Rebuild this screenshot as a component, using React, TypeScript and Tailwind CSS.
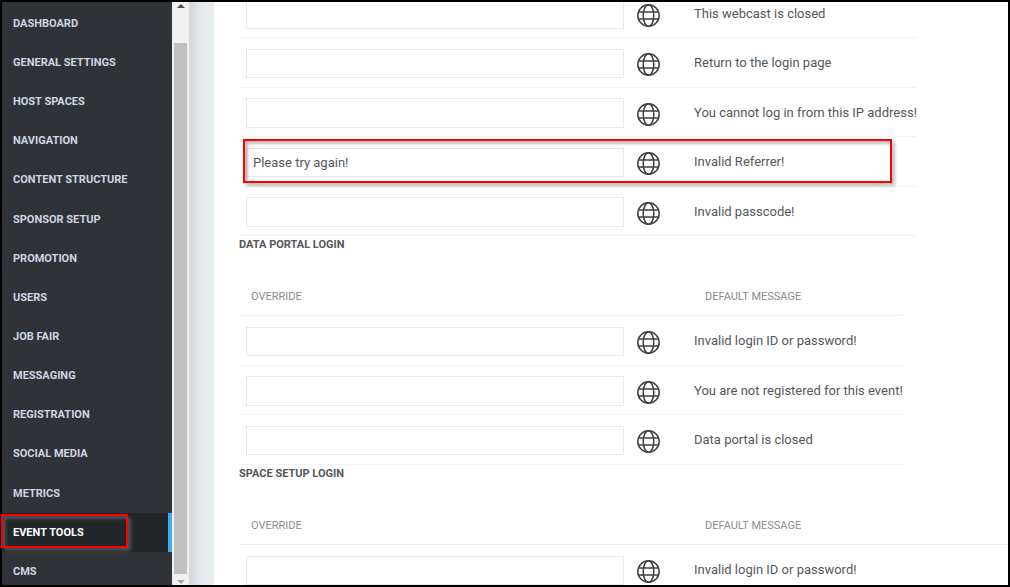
import clsx from "clsx";
import React, { useState } from "react";

const menuItems = [
  "Dashboard",
  "General Settings",
  "Host Spaces",
  "Navigation",
  "Content Structure",
  "Sponsor Setup",
  "Promotion",
  "Users",
  "Job Fair",
  "Messaging",
  "Registration",
  "Social Media",
  "Metrics",
  "Event Tools",
  "CMS",
];

type Message = {
  text: string;
  override?: string;
  highlighted?: boolean;
};

const webcastMessages: Message[] = [
  { text: "This webcast is closed" },
  { text: "Return to the login page" },
  { text: "You cannot log in from this IP address!" },
  { text: "Invalid Referrer!", override: "Please try again!", highlighted: true },
  { text: "Invalid passcode!" },
];

const dataPortalMessages: Message[] = [
  { text: "Invalid login ID or password!" },
  { text: "You are not registered for this event!" },
  { text: "Data portal is closed" },
];

const spaceSetupMessages: Message[] = [{ text: "Invalid login ID or password!" }];

const GlobeIcon = () => (
  <svg
    viewBox="0 0 23 23"
    className="block size-[23px]"
    fill="none"
    stroke="#404040"
    strokeWidth="1.5"
    aria-hidden="true"
  >
    <circle cx="11.5" cy="11.5" r="10.7" />
    <ellipse cx="11.5" cy="11.5" rx="5.3" ry="10.7" />
    <path d="M1.6 8h19.8M1.6 15h19.8" />
  </svg>
);

// Red box drawn over the part of the page that the guide points at
const Callout = ({ className }: { className: string }) => (
  <span
    className={clsx("pointer-events-none absolute border-2 border-[#fe0000]", className)}
  />
);

const Sidebar = () => {
  const [active, setActive] = useState("Event Tools");

  return (
    <aside className="flex w-[187px] shrink-0 overflow-y-clip bg-[#2f3237]">
      <nav className="box-content flex h-screen flex-1 flex-col pt-[2px]">
        {menuItems.map((item) => (
          <a
            key={item}
            href="#"
            onClick={() => setActive(item)}
            className={clsx(
              "relative flex flex-1 items-center pt-px pl-[11px] text-[11px] font-bold uppercase",
              active === item
                ? "border-r-4 border-[#41a9ec] bg-[#222629] text-white"
                : "text-[#cfd6e2]"
            )}
          >
            {item}
            {item === "Event Tools" && (
              <Callout className="top-px bottom-1 -left-px w-[127px] shadow-[3px_3px_3px_#4c4f52,inset_3px_3px_3px_#4c4f52]" />
            )}
          </a>
        ))}
      </nav>
      <div className="flex w-[17px] flex-col items-center bg-[#f1f1f1]">
        <svg viewBox="0 0 8 4" className="mt-[2px] h-1 w-2" fill="#505050">
          <path d="M0 4L4 0L8 4Z" />
        </svg>
        <div className="mt-[35px] w-[13px] flex-1 bg-[#c1c1c1]" />
        <svg viewBox="0 0 8 4" className="mt-[6px] mb-px h-1 w-2" fill="#a3a3a3">
          <path d="M0 0L4 4L8 0Z" />
        </svg>
      </div>
    </aside>
  );
};

type MessageTableProps = {
  name: string;
  messages: Message[];
  hasHeader?: boolean;
  className?: string;
};

const MessageTable = ({ name, messages, hasHeader, className }: MessageTableProps) => (
  <table className={clsx("border-separate border-spacing-0 whitespace-nowrap", className)}>
    <colgroup>
      <col className="w-[385px]" />
      <col className="w-[70px]" />
      <col />
    </colgroup>
    {hasHeader && (
      <thead>
        <tr className="h-[37px] text-left text-[11px] text-[#878c8f] uppercase">
          <th className="border-b border-[#eef0f5] pl-3 font-normal">Override</th>
          <th className="border-b border-[#eef0f5]" />
          <th className="border-b border-[#eef0f5] pl-[11px] font-normal">Default message</th>
        </tr>
      </thead>
    )}
    <tbody>
      {messages.map(({ text, override, highlighted }, index) => {
        const tall = hasHeader ? index % 2 === 0 : index % 2 === 1;
        return (
          <tr key={text} className={clsx("relative align-top", tall ? "h-[50px]" : "h-[49px]")}>
            <td
              className={clsx(
                "border-b border-[#f1f2f5] pl-[7px]",
                tall ? "pt-[11px]" : "pt-[10px]"
              )}
            >
              <input
                type="text"
                aria-label={`${name}: ${text}`}
                defaultValue={override}
                className={clsx(
                  "block w-[378px] border border-[#e6e8ef] bg-white px-[6px] text-[13px] outline-none",
                  tall ? "h-[29px]" : "h-[30px]"
                )}
              />
            </td>
            <td className="border-b border-[#f1f2f5] pt-[15px] pr-[34px] pl-[13px]">
              <button type="button" aria-label={`Translate ${text}`} className="block">
                <GlobeIcon />
              </button>
            </td>
            <td className="border-b border-[#f1f2f5] pt-[16px] text-[13px] leading-[18px]">
              {text}
              {highlighted && (
                <Callout className="top-[2px] bottom-1 left-1 w-[649px] shadow-[3px_3px_3px_rgba(0,0,0,0.25),inset_3px_3px_3px_rgba(0,0,0,0.25)]" />
              )}
            </td>
          </tr>
        );
      })}
    </tbody>
  </table>
);

const SectionTitle = ({ children }: { children: React.ReactNode }) => (
  <h2 className="text-[11px] leading-[18px] font-bold uppercase">{children}</h2>
);

const App = () => {
  return (
    <div className="flex h-screen border-2 border-black bg-white font-[Roboto,sans-serif] text-[#54585a]">
      <Sidebar />
      <div className="w-[25px] shrink-0 bg-linear-to-r from-[#d1d7da] via-[#e5e9ed] to-[#e9eef1]" />
      <main className="flex-1 overflow-hidden pl-[25px]">
        <div className="-mt-[13px]">
          <MessageTable name="Webcast login" messages={webcastMessages} />
          <SectionTitle>Data Portal Login</SectionTitle>
          <MessageTable
            name="Data portal login"
            messages={dataPortalMessages}
            hasHeader
            className="mt-[25px]"
          />
          <SectionTitle>Space Setup Login</SectionTitle>
          <MessageTable
            name="Space setup login"
            messages={spaceSetupMessages}
            hasHeader
            className="mt-[25px] w-full table-fixed"
          />
        </div>
      </main>
    </div>
  );
};

export default App;
